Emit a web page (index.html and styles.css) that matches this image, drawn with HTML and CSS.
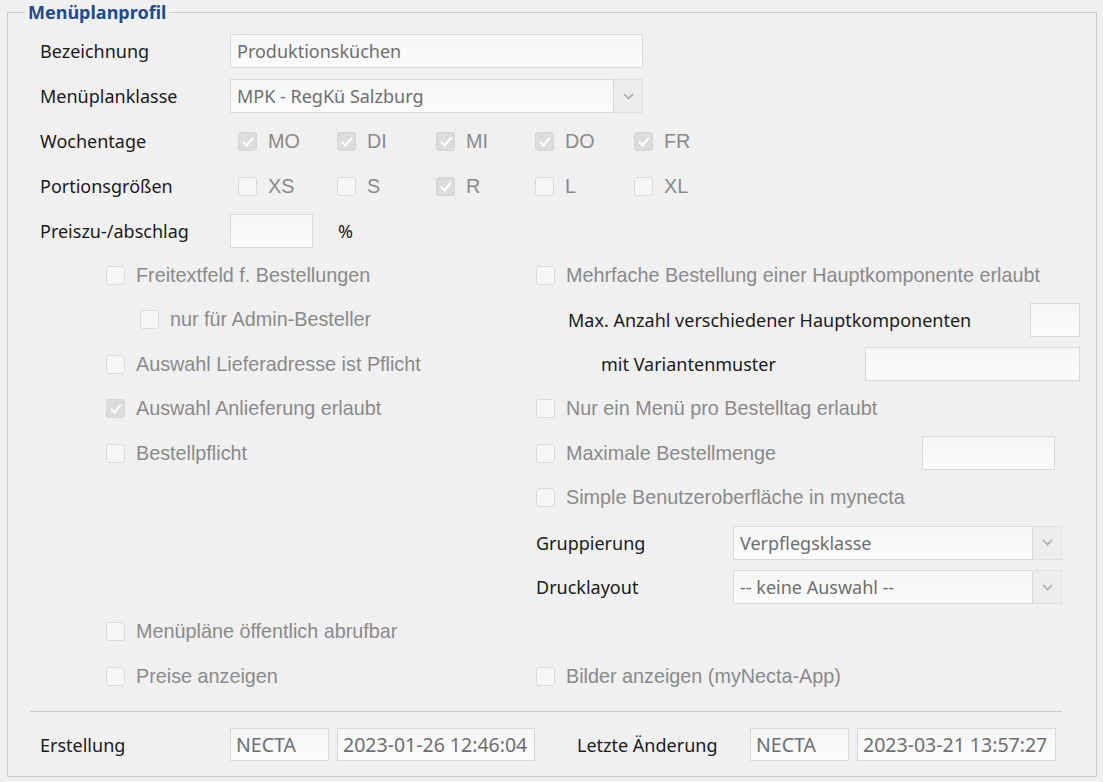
FILE: index.html
```html
<!DOCTYPE html>
<html lang="de">

<head>
    <meta charset="UTF-8">
    <meta name="viewport" content="width=device-width, initial-scale=1.0">
    <title>Menüplanprofil</title>
    <link rel="stylesheet" href="styles.css">
</head>

<body>
<fieldset class="profile">
    <legend>Menüplanprofil</legend>
    <div class="inner">

        <div class="top">
            <div class="lbl">Bezeichnung</div>
            <div class="field w413">Produktionsküchen</div>

            <div class="lbl">Menüplanklasse</div>
            <div class="select w413">
                <span class="val">MPK - RegKü Salzburg</span>
                <span class="arrow"><svg width="11" height="7" viewBox="0 0 11 7"><path d="M1 1 L5.5 5.5 L10 1" fill="none" stroke="#a9a9a9" stroke-width="1.6"/></svg></span>
            </div>

            <div class="lbl">Wochentage</div>
            <div class="opts">
                <label class="chk"><span class="box on"></span>MO</label>
                <label class="chk"><span class="box on"></span>DI</label>
                <label class="chk"><span class="box on"></span>MI</label>
                <label class="chk"><span class="box on"></span>DO</label>
                <label class="chk"><span class="box on"></span>FR</label>
            </div>

            <div class="lbl">Portionsgrößen</div>
            <div class="opts">
                <label class="chk"><span class="box"></span>XS</label>
                <label class="chk"><span class="box"></span>S</label>
                <label class="chk"><span class="box on"></span>R</label>
                <label class="chk"><span class="box"></span>L</label>
                <label class="chk"><span class="box"></span>XL</label>
            </div>

            <div class="lbl">Preiszu-/abschlag</div>
            <div class="pct">
                <div class="field w83"></div>
                <span class="lbl">%</span>
            </div>
        </div>

        <div class="grid">
            <label class="chk"><span class="box"></span>Freitextfeld f. Bestellungen</label>
            <label class="chk"><span class="box"></span>Mehrfache Bestellung einer Hauptkomponente erlaubt</label>

            <label class="chk sub"><span class="box"></span>nur für Admin-Besteller</label>
            <div class="line">
                <span class="lbl ind1">Max. Anzahl verschiedener Hauptkomponenten</span>
                <div class="field w50"></div>
            </div>

            <label class="chk"><span class="box"></span>Auswahl Lieferadresse ist Pflicht</label>
            <div class="line">
                <span class="lbl ind2">mit Variantenmuster</span>
                <div class="field w215"></div>
            </div>

            <label class="chk"><span class="box on"></span>Auswahl Anlieferung erlaubt</label>
            <label class="chk"><span class="box"></span>Nur ein Menü pro Bestelltag erlaubt</label>

            <label class="chk"><span class="box"></span>Bestellpflicht</label>
            <div class="line r25">
                <label class="chk"><span class="box"></span>Maximale Bestellmenge</label>
                <div class="field w133"></div>
            </div>

            <div></div>
            <label class="chk"><span class="box"></span>Simple Benutzeroberfläche in mynecta</label>

            <div></div>
            <div class="line r18">
                <span class="lbl">Gruppierung</span>
                <div class="select w329">
                    <span class="val">Verpflegsklasse</span>
                    <span class="arrow"><svg width="11" height="7" viewBox="0 0 11 7"><path d="M1 1 L5.5 5.5 L10 1" fill="none" stroke="#a9a9a9" stroke-width="1.6"/></svg></span>
                </div>
            </div>

            <div></div>
            <div class="line r18">
                <span class="lbl">Drucklayout</span>
                <div class="select w329">
                    <span class="val">-- keine Auswahl --</span>
                    <span class="arrow"><svg width="11" height="7" viewBox="0 0 11 7"><path d="M1 1 L5.5 5.5 L10 1" fill="none" stroke="#a9a9a9" stroke-width="1.6"/></svg></span>
                </div>
            </div>

            <label class="chk"><span class="box"></span>Menüpläne öffentlich abrufbar</label>
            <div></div>

            <label class="chk"><span class="box"></span>Preise anzeigen</label>
            <label class="chk"><span class="box"></span>Bilder anzeigen (myNecta-App)</label>
        </div>

        <hr class="sep">

        <div class="footer">
            <span class="lbl f-first">Erstellung</span>
            <div class="field small w99">NECTA</div>
            <div class="field small w198">2023-01-26 12:46:04</div>
            <span class="lbl f-second">Letzte Änderung</span>
            <div class="field small w99">NECTA</div>
            <div class="field small w199">2023-03-21 13:57:27</div>
        </div>

    </div>
</fieldset>
</body>

</html>
```

FILE: styles.css
```css
* {
    box-sizing: border-box;
}

body,
html {
    margin: 0;
    padding: 0;
    background-color: #f0f0f0;
}

body {
    padding-top: 1px;
    font-family: "Noto Sans", "Open Sans", sans-serif;
    font-size: 18px;
    color: #1a1a1a;
}

.profile {
    margin: 0 6px 0 7px;
    padding: 0;
    border: 1px solid #c9cbd9;
    min-width: 0;
}

.profile legend {
    margin-left: 17px;
    padding: 0 3px;
    font-size: 18px;
    line-height: 22px;
    font-weight: bold;
    color: #1f4b8e;
}

.inner {
    padding: 11px 16px 15px 32px;
}

.lbl {
    white-space: nowrap;
}

/* top block */

.top {
    display: grid;
    grid-template-columns: 190px 1fr;
    grid-auto-rows: 34px;
    row-gap: 11px;
    align-items: center;
}

.field {
    height: 34px;
    border: 1px solid #d6d8e2;
    background: linear-gradient(#f5f6f6, #fbfbfb);
    color: #6e6e6e;
    padding: 0 6px;
    display: flex;
    align-items: center;
    white-space: nowrap;
}

.field.small {
    height: 33px;
    font-size: 19.5px;
    padding: 0 5px;
}

.w413 { width: 413px; }
.w83 { width: 83px; }
.w50 { width: 50px; }
.w215 { width: 215px; }
.w133 { width: 133px; }
.w329 { width: 329px; }
.w99 { width: 99px; }
.w198 { width: 198px; }
.w199 { width: 199px; }

.select {
    height: 34px;
    display: flex;
    color: #6e6e6e;
}

.select .val {
    flex: 1;
    display: flex;
    align-items: center;
    padding: 0 6px;
    border: 1px solid #d6d8e2;
    background: linear-gradient(#f5f6f6, #fbfbfb);
    white-space: nowrap;
}

.select .arrow {
    width: 29px;
    display: flex;
    align-items: center;
    justify-content: center;
    border: 1px solid #dfe0e6;
    border-left: none;
    background-color: #ededed;
}

.opts {
    display: flex;
    padding-left: 8px;
}

.opts .chk {
    width: 99px;
}

.pct {
    display: flex;
    align-items: center;
    gap: 25px;
}

/* checkboxes */

.chk {
    display: flex;
    align-items: center;
    gap: 11px;
    font-family: "Liberation Sans", Arial, sans-serif;
    font-size: 19.8px;
    color: #8a8a8a;
    white-space: nowrap;
}

.box {
    width: 19px;
    height: 19px;
    flex: none;
    border: 1px solid #dadada;
    border-radius: 3px;
    background-color: #f6f6f6;
    position: relative;
}

.box.on {
    background-color: #dcdcdc;
    border-color: #d4d4d4;
}

.box.on::after {
    content: "";
    position: absolute;
    left: 6px;
    top: 2px;
    width: 4px;
    height: 9px;
    border: solid #fff;
    border-width: 0 2px 2px 0;
    transform: rotate(40deg);
}

/* lower block */

.grid {
    display: grid;
    grid-template-columns: 430px 544px;
    grid-auto-rows: 34px;
    row-gap: 10.6px;
    align-items: center;
    margin-top: 10px;
    margin-left: 66px;
}

.sub {
    padding-left: 34px;
}

.line {
    display: flex;
    align-items: center;
    justify-content: space-between;
}

.line.r25 {
    padding-right: 25px;
}

.line.r18 {
    padding-right: 18px;
}

.ind1 {
    padding-left: 32px;
}

.ind2 {
    padding-left: 65px;
}

.sep {
    margin: 18px 18px 16px -10px;
    border: none;
    border-top: 1px solid #c9cbd9;
}

.footer {
    display: flex;
    align-items: center;
    gap: 8px;
}

.f-first {
    width: 182px;
}

.f-second {
    width: 165px;
    margin-left: 34px;
}
```
